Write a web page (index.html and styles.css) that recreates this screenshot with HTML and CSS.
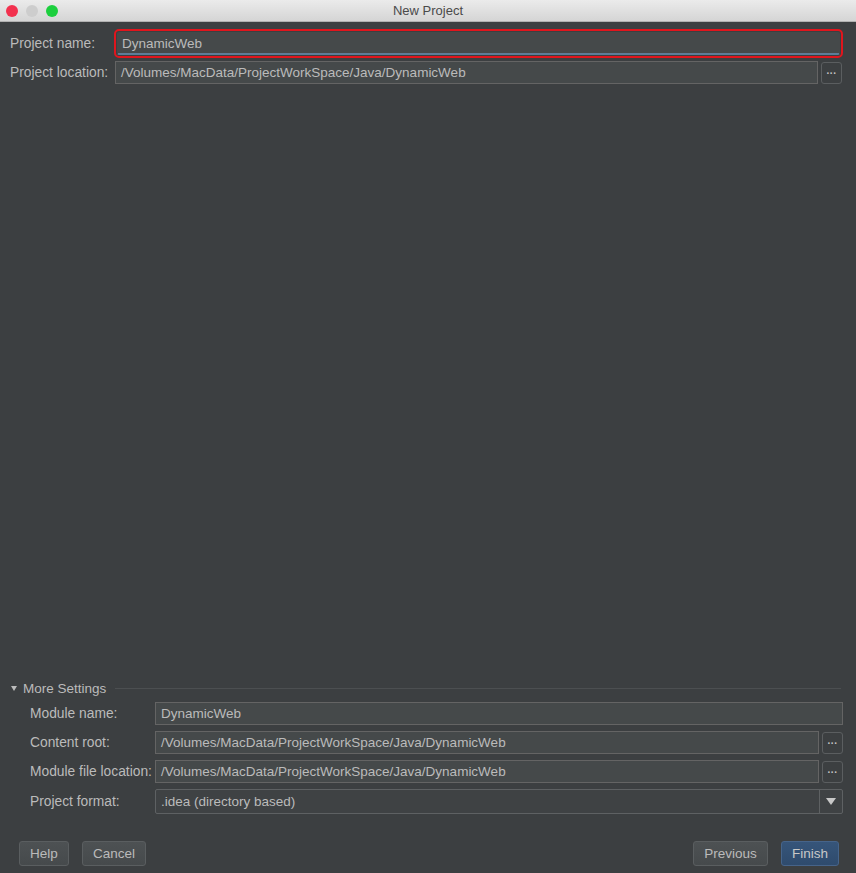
FILE: index.html
```html
<!DOCTYPE html>
<html lang="en">
<head>
    <meta charset="UTF-8">
    <title>New Project</title>
    <link rel="stylesheet" href="styles.css">
</head>
<body>
    <div class="titlebar">
        <div class="lights">
            <span class="light red"></span>
            <span class="light gray"></span>
            <span class="light green"></span>
        </div>
        <div class="title">New Project</div>
        <div></div>
    </div>

    <div class="dialog">
        <div class="top-form">
            <div class="row">
                <label class="label">Project name:</label>
                <div class="field focused">DynamicWeb</div>
            </div>
            <div class="row">
                <label class="label">Project location:</label>
                <div class="field">/Volumes/MacData/ProjectWorkSpace/Java/DynamicWeb</div>
                <button class="browse">...</button>
            </div>
        </div>

        <div class="spacer"></div>

        <div class="more">
            <div class="more-header">
                <span class="arrow"></span>
                <span>More Settings</span>
                <span class="line"></span>
            </div>
            <div class="more-rows">
                <div class="row">
                    <label class="label wide">Module name:</label>
                    <div class="field">DynamicWeb</div>
                </div>
                <div class="row">
                    <label class="label wide">Content root:</label>
                    <div class="field">/Volumes/MacData/ProjectWorkSpace/Java/DynamicWeb</div>
                    <button class="browse">...</button>
                </div>
                <div class="row">
                    <label class="label wide">Module file location:</label>
                    <div class="field">/Volumes/MacData/ProjectWorkSpace/Java/DynamicWeb</div>
                    <button class="browse">...</button>
                </div>
                <div class="row">
                    <label class="label wide">Project format:</label>
                    <div class="combo">
                        <span class="combo-text">.idea (directory based)</span>
                        <span class="combo-btn">
                            <svg width="10" height="8" viewBox="0 0 10 8"><path d="M0 0h10L5 7z" fill="#c8c8c8"/></svg>
                        </span>
                    </div>
                </div>
            </div>
        </div>

        <div class="footer">
            <div class="btn-group">
                <button class="btn help">Help</button>
                <button class="btn cancel">Cancel</button>
            </div>
            <div class="btn-group">
                <button class="btn previous">Previous</button>
                <button class="btn finish">Finish</button>
            </div>
        </div>
    </div>
</body>
</html>
```

FILE: styles.css
```css
html, body {
    margin: 0;
    padding: 0;
}
body {
    width: 856px;
    height: 873px;
    display: flex;
    flex-direction: column;
    font-family: "Liberation Sans", Arial, sans-serif;
    font-size: 13.5px;
    color: #bbbbbb;
    background-color: #3c3f41;
    overflow: hidden;
}
.titlebar {
    height: 22px;
    box-sizing: border-box;
    display: grid;
    grid-template-columns: 1fr auto 1fr;
    align-items: center;
    background: linear-gradient(#ebebeb, #d5d5d5);
    border-bottom: 1px solid #b1b1b1;
}
.lights {
    display: flex;
    gap: 8px;
    padding-left: 6px;
}
.light {
    width: 12px;
    height: 12px;
    border-radius: 50%;
}
.red { background-color: #f2314e; }
.gray { background-color: #cdcdcd; }
.green { background-color: #1ccf3e; }
.title {
    color: #4a4a4a;
    font-size: 13px;
}
.dialog {
    flex: 1;
    display: flex;
    flex-direction: column;
    padding: 10px 14px 7px 10px;
}
.top-form, .more-rows {
    display: flex;
    flex-direction: column;
    gap: 6px;
}
.row {
    display: flex;
    align-items: center;
    gap: 3px;
}
.label {
    width: 102px;
    flex-shrink: 0;
    font-size: 13.8px;
    white-space: nowrap;
}
.label.wide {
    width: 122px;
}
.field {
    flex: 1;
    height: 23px;
    box-sizing: border-box;
    display: flex;
    align-items: center;
    padding-left: 5px;
    background-color: #45494a;
    border: 1px solid #646464;
}
.field.focused {
    border: 1px solid #45494a;
    border-bottom: 2px solid #5d7d99;
    outline: 2px solid #e0151d;
    outline-offset: 1px;
    border-radius: 2px;
    margin-left: 2px;
    margin-right: 2px;
    padding-left: 4px;
}
.browse {
    width: 21px;
    height: 22px;
    padding: 0 0 4px 0;
    background-color: #3c3f41;
    border: 1px solid #5b5e60;
    border-radius: 3px;
    color: #c4c4c4;
    font-family: "Liberation Sans", Arial, sans-serif;
    font-size: 10px;
    font-weight: bold;
    letter-spacing: 0.5px;
}
.spacer {
    flex: 1;
}
.more {
    display: flex;
    flex-direction: column;
    gap: 6px;
}
.more-header {
    display: flex;
    align-items: center;
    gap: 4px;
}
.arrow {
    width: 0;
    height: 0;
    margin-left: 1px;
    margin-right: 2px;
    border-left: 3px solid transparent;
    border-right: 3px solid transparent;
    border-top: 5px solid #bbbbbb;
}
.line {
    flex: 1;
    height: 1px;
    margin-left: 5px;
    margin-right: 1px;
    background-color: #4c4f51;
}
.more-rows {
    padding-left: 20px;
    margin-right: -1px;
}
.combo {
    flex: 1;
    height: 25px;
    box-sizing: border-box;
    display: flex;
    align-items: center;
    background-color: #3f4244;
    border: 1px solid #5e6163;
    border-radius: 2px;
}
.combo-text {
    flex: 1;
    padding-left: 5px;
}
.combo-btn {
    width: 22px;
    height: 100%;
    display: flex;
    align-items: center;
    justify-content: center;
    border-left: 1px solid #5e6163;
}
.footer {
    display: flex;
    justify-content: space-between;
    align-items: center;
    margin-top: 27px;
    padding-left: 9px;
    padding-right: 3px;
}
.btn-group {
    display: flex;
    gap: 13px;
}
.btn {
    height: 25px;
    padding: 0;
    background: linear-gradient(#4d5153, #464a4c);
    border: 1px solid #5a5e60;
    border-radius: 3px;
    color: #bbbbbb;
    font-family: "Liberation Sans", Arial, sans-serif;
    font-size: 13.5px;
}
.help { width: 50px; }
.cancel { width: 64px; }
.previous { width: 75px; }
.finish {
    width: 58px;
    background: linear-gradient(#36557a, #2f4b6d);
    border-color: #46648a;
    color: #c8c8c8;
}
```
